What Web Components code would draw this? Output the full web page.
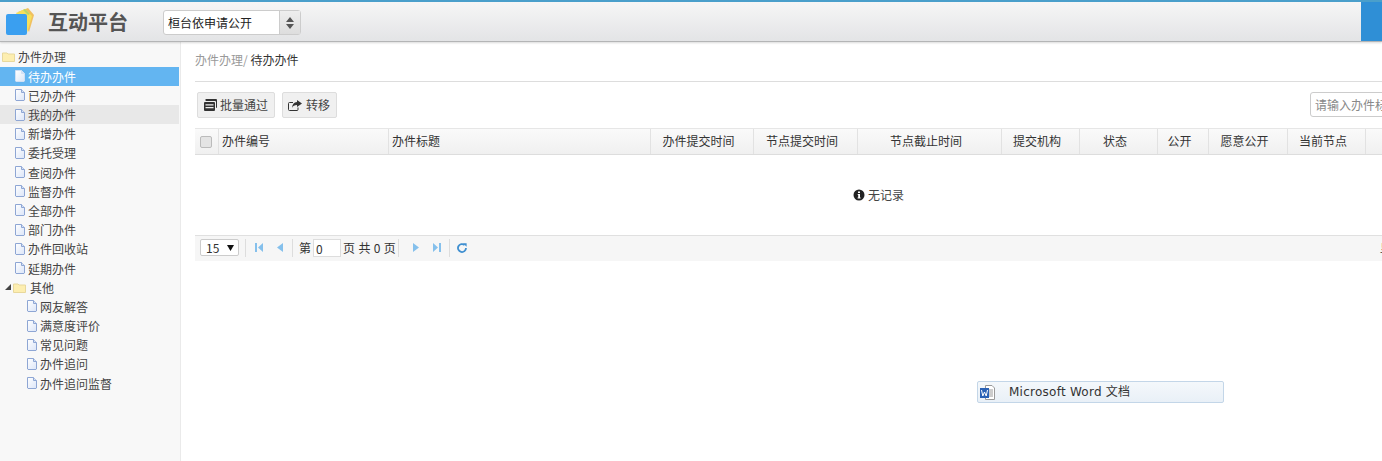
<!DOCTYPE html>
<html lang="zh">
<head>
<meta charset="utf-8">
<title>互动平台</title>
<style>
    html, body { margin: 0; height: 100%; overflow: hidden; background: #fff; }
    body { font: 12px/18px "Noto Sans CJK SC", sans-serif; color: #333; }
    #app { display: flex; flex-direction: column; height: 461px; width: 1382px; position: relative; overflow: hidden; }
    #body { display: flex; flex: 1; min-height: 0; }
</style>
</head>
<body>
<div id="app">
    <app-header></app-header>
    <div id="body">
        <tree-nav>
            <tree-item kind="folder">办件办理</tree-item>
            <tree-item indent="1" selected>待办办件</tree-item>
            <tree-item indent="1">已办办件</tree-item>
            <tree-item indent="1" hover>我的办件</tree-item>
            <tree-item indent="1">新增办件</tree-item>
            <tree-item indent="1">委托受理</tree-item>
            <tree-item indent="1">查阅办件</tree-item>
            <tree-item indent="1">监督办件</tree-item>
            <tree-item indent="1">全部办件</tree-item>
            <tree-item indent="1">部门办件</tree-item>
            <tree-item indent="1">办件回收站</tree-item>
            <tree-item indent="1">延期办件</tree-item>
            <tree-item kind="folder" open>其他</tree-item>
            <tree-item indent="2">网友解答</tree-item>
            <tree-item indent="2">满意度评价</tree-item>
            <tree-item indent="2">常见问题</tree-item>
            <tree-item indent="2">办件追问</tree-item>
            <tree-item indent="2">办件追问监督</tree-item>
        </tree-nav>
        <main-panel></main-panel>
    </div>
    <word-tip></word-tip>
</div>

<script>
// helper: every component just sets its own shadow markup
function shadow(el, html) {
    el.attachShadow({ mode: 'open' });
    el.shadowRoot.innerHTML = html;
}

class AppHeader extends HTMLElement {
    constructor() {
        super();
        shadow(this, `
            <style>
                :host { display: flex; flex: none; height: 42px; box-sizing: border-box; align-items: stretch;
                    border-top: 2px solid #4a9fcb; border-bottom: 1px solid #b4b5b6;
                    background: linear-gradient(#f6f6f6, #e3e4e6); box-shadow: 0 1px 2px rgba(0,0,0,.15); position: relative; z-index: 2; }
                .logo { flex: none; width: 36px; margin-left: 4px; display: flex; align-items: flex-start; padding-top: 4px; box-sizing: border-box; }
                .title { flex: none; width: 115px; margin-left: 8px; font-size: 20px; font-weight: 700; line-height: 40px; color: #555; }
                .picker { flex: none; align-self: flex-start; margin-top: 8px; width: 138px; height: 25px; box-sizing: border-box; display: flex;
                    border: 1px solid #ccc; border-radius: 3px; background: #fff; }
                .picker span { flex: 1; padding-left: 4px; line-height: 23px; color: #222; }
                .picker i { flex: none; width: 20px; border-left: 1px solid #ccc; background: linear-gradient(#eee, #ddd);
                    display: flex; align-items: center; justify-content: center; }
                .spacer { flex: 1; }
                .side { flex: none; width: 21px; background: #2f8fd6; }
            </style>
            <div class="logo">
                <svg width="32" height="30" viewBox="0 0 32 30">
                    <path d="M14 6 L24 2 L30 9 L25 26 Z" fill="#f0c060"/>
                    <path d="M12 7 L21 3 L28 10 L23 27 Z" fill="#f6e05c"/>
                    <path d="M19 4 L21 3 L26 8 L24 9 Z" fill="#b9d66a"/>
                    <rect x="2" y="8" width="21" height="21" rx="2" fill="#3a9ff0"/>
                </svg>
            </div>
            <div class="title">互动平台</div>
            <div class="picker">
                <span>桓台依申请公开</span>
                <i><svg width="8" height="12" viewBox="0 0 8 12"><path d="M4 0 L8 5 H0 Z M0 7 H8 L4 12 Z" fill="#555"/></svg></i>
            </div>
            <div class="spacer"></div>
            <div class="side"></div>
        `);
    }
}

class TreeNav extends HTMLElement {
    constructor() {
        super();
        shadow(this, `
            <style>
                :host { display: block; flex: none; width: 181px; box-sizing: border-box; padding: 5.4px 1px 0 0;
                    background: #f8f8f8; border-right: 1px solid #eaeaea; }
            </style>
            <slot></slot>
        `);
    }
}

class TreeItem extends HTMLElement {
    constructor() {
        super();
        const folder = this.getAttribute('kind') === 'folder';
        const indent = Number(this.getAttribute('indent') || 0);
        const sel = this.hasAttribute('selected');
        const gid = 'g' + Math.random().toString(36).slice(2);
        const icon = folder
            ? `<svg width="13" height="11" viewBox="0 0 13 11"><path d="M.5 2 H5 L6 3 H12.5 V10.5 H.5 Z" fill="#fdeeb0" stroke="#e8d89c"/></svg>`
            : `<svg width="10" height="12" viewBox="0 0 10 12">
                   <defs><linearGradient id="${gid}" x1="0" y1="0" x2="1" y2="1"><stop offset="0" stop-color="#fff"/><stop offset="1" stop-color="${sel ? '#d9e6f7' : '#dbe5f8'}"/></linearGradient></defs>
                   <path d="M.5 .5 H6.5 L9.5 3.5 V11 L9 11.5 H1 L.5 11 Z" fill="url(#${gid})" stroke="${sel ? '#cfe0f5' : '#8ea6d4'}"/>
                   <path d="M6.5 .5 V3.5 H9.5" fill="#d5e1f5" stroke="${sel ? '#cfe0f5' : '#8ea6d4'}"/>
               </svg>`;
        const arrow = this.hasAttribute('open')
            ? `<svg width="6" height="6" viewBox="0 0 6 6"><path d="M6 0 V6 H0 Z" fill="#444"/></svg>`
            : '';
        shadow(this, `
            <style>
                :host { display: flex; align-items: center; height: 19.2px; line-height: 19px; color: #444; white-space: nowrap; }
                :host([selected]) { background: #63b5f1; color: #fff; }
                :host([hover]) { background: #e8e8e8; }
                .arrow { flex: none; width: 6px; margin-left: 5px; margin-right: 2px; display: flex; }
                .icon { flex: none; display: flex; margin-right: 3px; }
            </style>
            <span class="arrow" style="${folder ? (arrow ? '' : 'margin-left:2px;width:0;margin-right:0') : `margin-left:${indent * 12 + 2}px;width:1px;margin-right:0`}">${arrow}</span>
            <span class="icon" style="${folder && arrow ? 'margin-right:4px' : ''}">${icon}</span>
            <slot></slot>
        `);
    }
}

class ToolButton extends HTMLElement {
    constructor() {
        super();
        shadow(this, `
            <style>
                :host { display: inline-flex; flex: none; align-items: center; gap: 3px; height: 26px; box-sizing: border-box; padding: 0 6px;
                    border: 1px solid #ddd; border-radius: 2px; background: #f0f0f0; color: #444; }
                :host([tight]) { padding: 0 6px 0 5px; }
                ::slotted(svg) { display: block; }
            </style>
            <slot name="icon"></slot><slot></slot>
        `);
    }
}

class DataGrid extends HTMLElement {
    constructor() {
        super();
        const cols = ['办件编号', '办件标题', '办件提交时间', '节点提交时间', '节点截止时间', '提交机构', '状态', '公开', '愿意公开', '当前节点', ''];
        const cells = cols.map((c, i) => `<div class="th${i < 2 ? ' left' : ''}">${c}</div>`).join('');
        shadow(this, `
            <style>
                :host { display: block; margin-top: 10px; }
                .head { display: grid; height: 27px; box-sizing: border-box;
                    grid-template-columns: 24px 170px 262px 103px 104px 144px 78px 78px 51px 79px 78px 60px;
                    border-top: 1px solid #e6e6e6; border-bottom: 1px solid #ddd; background: linear-gradient(#fafafa, #f0f0f0); }
                .th { border-right: 1px solid #e2e2e2; line-height: 23px; text-align: center; white-space: nowrap; color: #333; padding-right: 7px; }
                .th.left { text-align: left; padding: 0 0 0 3px; }
                .check { border-right: 1px solid #e2e2e2; display: flex; align-items: center; justify-content: center; padding-right: 1px; }
                .check i { width: 10px; height: 10px; border: 1px solid #bbb; border-radius: 2px; background: #e4e4e4; }
                .empty { height: 80px; display: flex; align-items: center; justify-content: center; gap: 3px; width: 1367px; color: #444; }
                .empty svg { display: block; }
            </style>
            <div class="head"><div class="check"><i></i></div>${cells}</div>
            <div class="empty">
                <svg width="12" height="12" viewBox="0 0 12 12"><circle cx="6" cy="6" r="5.5" fill="#222"/><path d="M5 2.5 H7 V4 H5 Z M4.7 5 H7 V8.6 H7.6 V9.6 H4.6 V8.6 H5.2 V6 H4.7 Z" fill="#fff"/></svg>
                <span>无记录</span>
            </div>
        `);
    }
}

class GridPager extends HTMLElement {
    constructor() {
        super();
        const c = '#85c0ec';
        shadow(this, `
            <style>
                :host { display: flex; align-items: center; height: 26px; box-sizing: border-box; padding: 0 0 2px 5px;
                    border-top: 1px solid #e0e0e0; background: #f6f6f6; white-space: nowrap; color: #333; }
                .size { flex: none; width: 39px; height: 17px; box-sizing: border-box; border: 1px solid #ccc; border-radius: 2px; background: #fff;
                    display: flex; align-items: center; justify-content: space-between; padding: 0 4px 0 5px; line-height: 15px; }
                .sep { flex: none; width: 1px; height: 18px; background: #ddd; }
                .btn { flex: none; width: 18px; display: flex; justify-content: center; }
                .page { flex: none; width: 28px; height: 18px; box-sizing: border-box; border: 1px solid #ddd; background: #fff; margin: 0 2px;
                    padding-left: 2px; line-height: 18px; }
                .total { word-spacing: .7px; }
                .info { flex: none; margin-left: auto; width: 40px; }
            </style>
            <div class="size"><span>15</span><svg width="7" height="6" viewBox="0 0 7 6"><path d="M0 0 H7 L3.5 6 Z" fill="#111"/></svg></div>
            <div class="sep" style="margin:0 1px 0 6px"></div>
            <div class="btn" style="margin-left:3px"><svg width="8" height="9" viewBox="0 0 8 9"><path d="M0 0 H2 V9 H0 Z M8 0 V9 L3 4.5 Z" fill="${c}"/></svg></div>
            <div class="btn" style="margin-left:3px"><svg width="6" height="9" viewBox="0 0 6 9"><path d="M6 0 V9 L0 4.5 Z" fill="${c}"/></svg></div>
            <div class="sep" style="margin:0 6px 0 3px"></div>
            <span>第</span><div class="page">0</div><span class="total">页 共 0 页</span>
            <div class="sep" style="margin-left:2px"></div>
            <div class="btn" style="margin-left:8px"><svg width="6" height="9" viewBox="0 0 6 9"><path d="M0 0 V9 L6 4.5 Z" fill="${c}"/></svg></div>
            <div class="btn" style="margin-left:3px"><svg width="8" height="9" viewBox="0 0 8 9"><path d="M0 0 V9 L5 4.5 Z M6 0 H8 V9 H6 Z" fill="${c}"/></svg></div>
            <div class="sep" style="margin:0 7px 0 3px"></div>
            <svg width="10" height="10" viewBox="0 0 10 10"><path d="M7.6 2 A4 4 0 1 0 9 5" fill="none" stroke="#3f8fd0" stroke-width="1.8"/><path d="M6 .2 L9.6 .2 L9.6 3.8 Z" fill="#3f8fd0"/></svg>
            <span class="info">显示0到0,共0记录</span>
        `);
    }
}

class MainPanel extends HTMLElement {
    constructor() {
        super();
        shadow(this, `
            <style>
                :host { display: block; flex: 1; min-width: 0; overflow: hidden; background: #fff; }
                .inner { width: 1225px; margin-left: 14px; }
                .crumb { height: 40px; box-sizing: border-box; padding-top: 9px; border-bottom: 1px solid #ddd; line-height: 18px; color: #333; }
                .crumb span { color: #999; }
                .bar { display: flex; gap: 7px; margin-top: 10px; padding-left: 2px; }
                .search { flex: none; margin-left: auto; width: 110px; height: 25px; box-sizing: border-box; border: 1px solid #ccc; border-radius: 3px;
                    padding-left: 4px; line-height: 23px; color: #888; white-space: nowrap; overflow: hidden; background: #fff; }
                svg { display: block; }
            </style>
            <div class="inner">
                <div class="crumb"><span>办件办理/</span> 待办办件</div>
                <div class="bar">
                    <tool-button>
                        <svg slot="icon" width="13" height="12" viewBox="0 0 13 12"><path d="M3 0 H12 A1 1 0 0 1 13 1 V8 A1 1 0 0 1 12 9 V3 A1 1 0 0 0 11 2 H2 A1 1 0 0 1 3 0 Z" fill="#333"/><path d="M1 3 H10 A1 1 0 0 1 11 4 V11 A1 1 0 0 1 10 12 H1 A1 1 0 0 1 0 11 V4 A1 1 0 0 1 1 3 Z M1.5 5.2 V6.4 H9.5 V5.2 Z M1.5 8 V9.2 H9.5 V8 Z" fill="#333" fill-rule="evenodd"/></svg>
                        批量通过
                    </tool-button>
                    <tool-button tight>
                        <svg slot="icon" width="14" height="11" viewBox="0 0 14 11" style="margin-right:1px"><path d="M5 2.5 H1.5 A1 1 0 0 0 .5 3.5 V9.5 A1 1 0 0 0 1.5 10.5 H9 A1 1 0 0 0 10 9.5 V7.5" fill="none" stroke="#333"/><path d="M9 0 L14 3.5 L9 7 V5 C6.5 5 5 5.8 4 8 C4 4.5 6 2.3 9 2 Z" fill="#333"/></svg>
                        转移
                    </tool-button>
                    <div class="search">请输入办件标题</div>
                </div>
                <data-grid></data-grid>
                <grid-pager></grid-pager>
            </div>
        `);
    }
}

class WordTip extends HTMLElement {
    constructor() {
        super();
        shadow(this, `
            <style>
                /* floating shell tooltip, lies over the page */
                :host { position: absolute; left: 977px; top: 381px; width: 247px; height: 22px; box-sizing: border-box; display: flex; align-items: center;
                    border: 1px solid #c3d6e8; border-radius: 2px; background: linear-gradient(#f4f8fb, #e9f0f7); z-index: 3; }
                svg { flex: none; display: block; margin-left: 1px; }
                span { margin-left: 13px; font-family: "DejaVu Sans", "Noto Sans CJK SC", sans-serif; font-size: 12px; letter-spacing: .25px; color: #333; white-space: nowrap; }
            </style>
            <svg width="17" height="17" viewBox="0 0 17 17">
                <path d="M6.5 1.5 H13 L15.5 4 V15.5 H6.5 Z" fill="#fff" stroke="#9a9a9a"/>
                <path d="M9 6 H14 M9 8 H14 M9 10 H14 M9 12 H14" stroke="#9a9a9a"/>
                <rect x="1" y="4" width="9" height="10" fill="#2b62b5"/>
                <path d="M2.5 6 L3.8 12 L5.5 8 L7.2 12 L8.5 6" fill="none" stroke="#fff"/>
            </svg>
            <span>Microsoft Word 文档</span>
        `);
    }
}

customElements.define('app-header', AppHeader);
customElements.define('tree-nav', TreeNav);
customElements.define('tree-item', TreeItem);
customElements.define('tool-button', ToolButton);
customElements.define('data-grid', DataGrid);
customElements.define('grid-pager', GridPager);
customElements.define('main-panel', MainPanel);
customElements.define('word-tip', WordTip);
</script>
</body>
</html>
